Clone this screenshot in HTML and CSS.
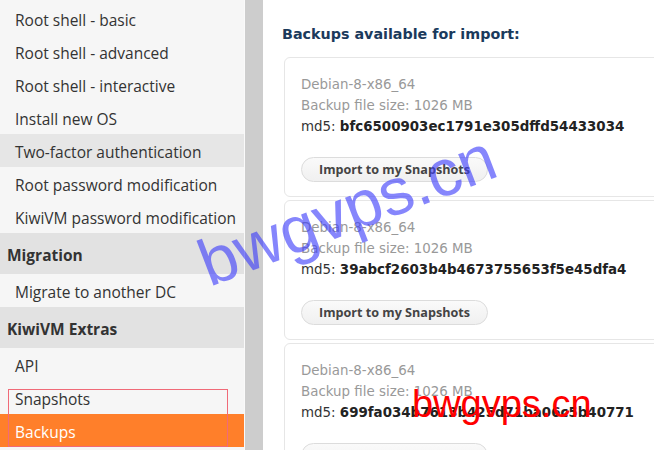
FILE: index.html
```html
<html>
    <head>
        <title>KiwiVM - Backups</title>
        <link rel="stylesheet" href="styles.css">
    </head>
    <body>
        <div class="page">
            <div class="sidebar">
                <a class="item">Root shell - basic</a>
                <a class="item">Root shell - advanced</a>
                <a class="item">Root shell - interactive</a>
                <a class="item">Install new OS</a>
                <a class="item hover">Two-factor authentication</a>
                <a class="item">Root password modification</a>
                <a class="item">KiwiVM password modification</a>
                <div class="section">Migration</div>
                <a class="item">Migrate to another DC</a>
                <div class="section">KiwiVM Extras</div>
                <a class="item">API</a>
                <a class="item">Snapshots</a>
                <a class="item selected">Backups</a>
            </div>
            <div class="gutter"></div>
            <div class="content">
                <h2>Backups available for import:</h2>

                <div class="backup">
                    <div class="muted">Debian-8-x86_64</div>
                    <div class="muted">Backup file size: 1026 MB</div>
                    <div>md5: <b>bfc6500903ec1791e305dffd54433034</b></div>
                    <button class="import">Import to my Snapshots</button>
                </div>

                <div class="backup">
                    <div class="muted">Debian-8-x86_64</div>
                    <div class="muted">Backup file size: 1026 MB</div>
                    <div>md5: <b>39abcf2603b4b4673755653f5e45dfa4</b></div>
                    <button class="import">Import to my Snapshots</button>
                </div>

                <div class="backup">
                    <div class="muted">Debian-8-x86_64</div>
                    <div class="muted">Backup file size: 1026 MB</div>
                    <div>md5: <b>699fa034b7613b425d71ba06c5b40771</b></div>
                    <button class="import">Import to my Snapshots</button>
                </div>
            </div>
        </div>

        <div class="annotation"></div>
        <div class="watermark blue">bwgvps.cn</div>
        <div class="watermark red">bwgvps.cn</div>
    </body>
</html>
```

FILE: styles.css
```css
body {
    margin: 0;
    width: 654px;
    height: 450px;
    overflow: hidden;
    background: #fff;
    color: #333;
}

.page {
    display: flex;
    height: 450px;
}

.sidebar {
    display: flex;
    flex-direction: column;
    width: 244px;
    flex-shrink: 0;
    padding-top: 2px;
    background: #f6f6f6;
    border-right: 1px solid #fafafa;
    font-family: "Open Sans", sans-serif;
    font-size: 15.5px;
    color: #333;
}

.sidebar .item {
    height: 31px;
    padding: 2px 0 0 15px;
    line-height: 33px;
    white-space: nowrap;
}

.sidebar .hover {
    background: #e6e6e6;
}

.sidebar .selected {
    background: #ff7f2a;
    color: #fff;
}

.sidebar .section {
    height: 39px;
    padding: 2px 0 0 7px;
    line-height: 41px;
    background: #e2e2e2;
    font-weight: bold;
}

.gutter {
    width: 18px;
    flex-shrink: 0;
    background: #cdcdcd;
}

.content {
    flex: 1;
    min-width: 0;
    overflow: hidden;
    padding: 24px 0 0 21px;
    font-family: "DejaVu Sans", Verdana, sans-serif;
    font-size: 13.4px;
}

h2 {
    margin: 0 0 13px -2px;
    font-size: 14.3px;
    line-height: 20px;
    color: #1b3a5c;
    white-space: nowrap;
}

.backup {
    width: 420px;
    height: 108px;
    margin-bottom: 3px;
    padding: 16px 16px 14px;
    border: 1px solid #e6e6e6;
    border-radius: 6px;
    line-height: 21px;
    white-space: nowrap;
}

.backup .muted {
    color: #999;
}

.backup b {
    color: #222;
}

.import {
    display: block;
    height: 25px;
    margin-top: 20px;
    padding: 0 17px;
    border: 1px solid #dcdcdc;
    border-radius: 13px;
    background: linear-gradient(#fafafa, #f0f0f0);
    font-family: "Open Sans", sans-serif;
    font-size: 12.6px;
    font-weight: bold;
    color: #444;
}

.annotation {
    position: absolute;
    left: 8px;
    top: 389px;
    width: 218px;
    height: 56px;
    border: 1px solid #f06a78;
}

.watermark {
    position: absolute;
    font-family: "Liberation Sans", Arial, sans-serif;
    white-space: nowrap;
}

.watermark.blue {
    left: 215px;
    top: 225px;
    font-size: 66px;
    color: rgba(60, 60, 250, 0.62);
    transform: rotate(-21deg);
    transform-origin: left bottom;
}

.watermark.red {
    left: 412px;
    top: 383px;
    font-size: 38px;
    color: #ff0000;
}
```
